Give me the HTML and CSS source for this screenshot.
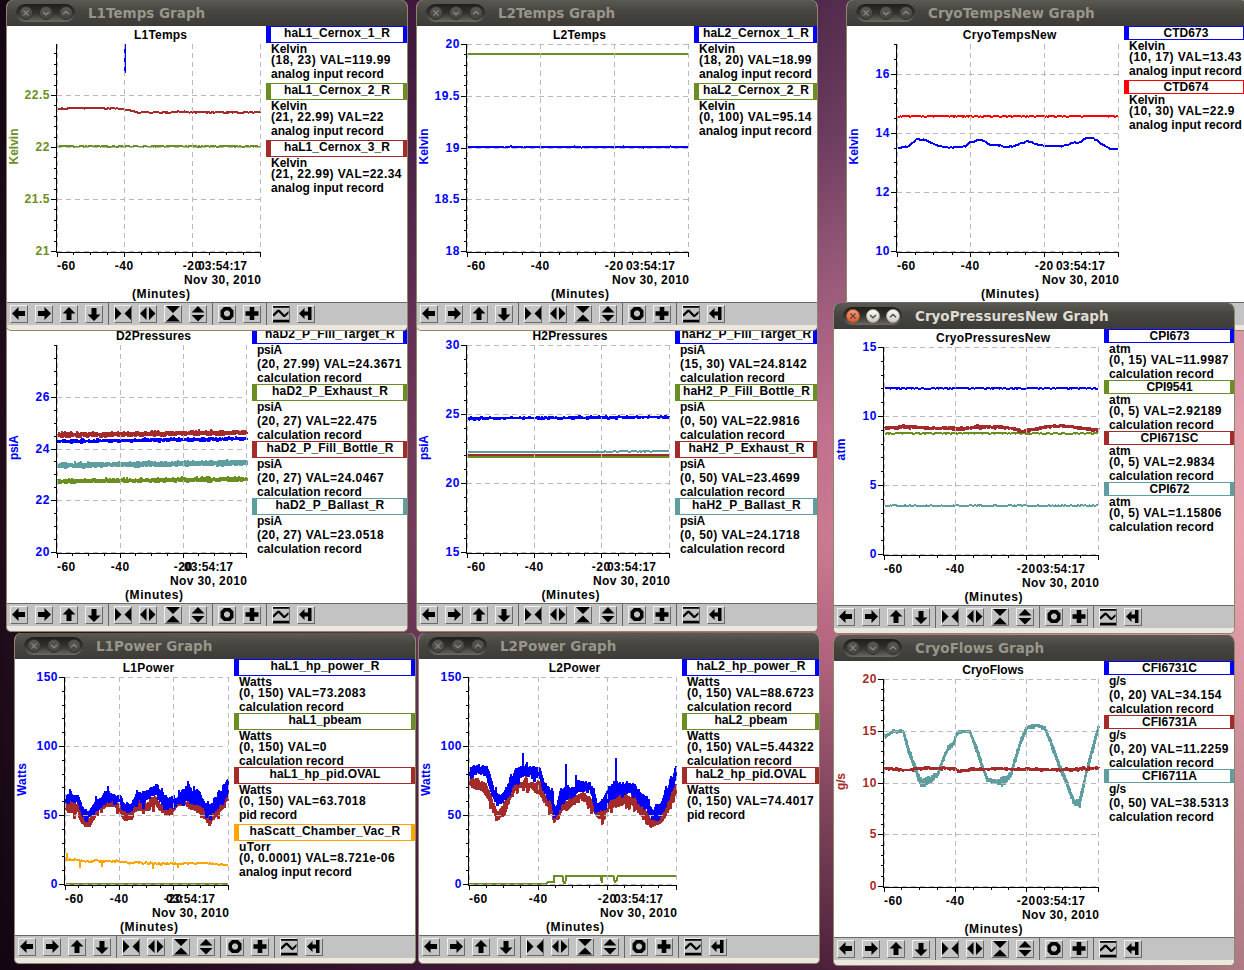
FILE: index.html
```html
<!DOCTYPE html>
<html lang="en">
<head>
<meta charset="utf-8">
<title>Strip charts</title>
<link rel="stylesheet" href="styles.css">
</head>
<body>
<main class="desktop" id="desktop"></main>
<script src="app.js"></script>
</body>
</html>
```

FILE: styles.css
```css
* { box-sizing: border-box; }
body { margin: 0; overflow: hidden; font-family: "Liberation Sans", Arial, sans-serif; }

.desktop {
  position: relative;
  width: 1244px;
  height: 970px;
  overflow: hidden;
  background:
    linear-gradient(90deg, rgba(14,2,14,.9) 0, rgba(44,10,46,.55) 33%, rgba(60,10,50,0) 66%, rgba(255,190,190,.12) 75%, rgba(255,196,196,.55) 100%),
    linear-gradient(180deg, #50294b 0, #6b3b5e 14%, #905474 26%, #c0708e 44%, #ca7a90 56%, #b0627c 68%, #7c4258 84%, #4a2038 100%);
}

.window {
  position: absolute;
  width: 402px;
  height: 331px;
  display: flex;
  flex-direction: column;
  border: 1px solid #8d866c;
  border-top: 0;
  border-radius: 7px 7px 5px 5px;
  background: #ece8e0;
  overflow: hidden;
}
.titlebar {
  flex: 0 0 26px;
  display: flex;
  align-items: center;
  gap: 13px;
  padding-left: 9px;
  background: linear-gradient(#5b5952, #464540 45%, #3c3b37);
}
.controls {
  width: 59px;
  height: 18px;
  display: flex;
  align-items: center;
  justify-content: center;
  gap: 6px;
  border-radius: 9px;
  background: linear-gradient(#1f1e1b, #33322e 50%, #6b6962);
}
.control {
  width: 14px;
  height: 14px;
  border-radius: 50%;
  border: 1px solid #33322e;
  background: linear-gradient(#5a5852, #45433e);
  stroke: #8c887e;
}
.active .control { background: linear-gradient(#fbfaf7, #cfcac0); border-color: #a9a59b; stroke: #4a4843; }
.active .control:first-child { background: linear-gradient(#f79a75, #df5a2b); border-color: #b0532f; }
.control svg { display: block; width: 12px; height: 12px; fill: none; stroke-width: 1.3; }
.caption {
  font: bold 13.5px "DejaVu Sans", sans-serif;
  color: #99958a;
  white-space: nowrap;
}
.active .caption { color: #dfdbd2; }

.body { flex: 0 0 276px; display: flex; background: #fff; }
.plot { flex: none; display: block; font-size: 12px; font-weight: bold; }
.grid { fill: none; stroke: #b9b9b9; stroke-dasharray: 5 4; }
.axis { fill: none; stroke: #000; }
.trace { fill: none; stroke-linejoin: bevel; }

.legend { flex: 1; min-width: 0; font-size: 12px; font-weight: bold; line-height: 12px; }
.name {
  height: 14px;
  border: solid;
  border-width: 1px 4px 1px 5px;
  line-height: 12px;
  text-align: center;
  white-space: nowrap;
}
.name.tall { height: 17px; }
.row { height: 14px; padding-left: 5px; white-space: nowrap; }
.row.short { height: 11px; }
.row.last { height: 12px; }
.row.deep { height: 15px; }
.ink { color: #000; display: inline-block; }

.toolbar {
  flex: 0 0 23px;
  display: flex;
  align-items: center;
  background: #c3c3c3;
  border-top: 1px solid #6a6a6a;
  padding-left: 3px;
}
.tools { display: flex; gap: 7px; }
.tools + .tools { border-left: 1px solid #666; height: 22px; align-items: center; padding-left: 5px; margin-left: 5px; }
.tool {
  width: 18px;
  height: 18px;
  border: 1px solid;
  border-color: #f0f0f0 #6a6a6a #6a6a6a #f0f0f0;
}
.tool svg { display: block; width: 16px; height: 16px; overflow: visible; }
```

FILE: app.js
```js
const BLUE = '#0000ff', GREEN = '#6b8e23', BROWN = '#a52a2a', TEAL = '#5f9ea0', RED = '#ff0000', ORANGE = '#ffa500';
const AI = ['analog input record', 113], CALC = ['calculation record', 105], PID = ['pid record', 58];

// Traces are envelopes: [x, top, bottom] in thirds of a pixel, offset by (dx, dy) pixels.
// A trace with thin set wanders on one centre line instead of filling the envelope.
const flat = (a, b, y0, y1, h) => [[a, y0 - h, y0 + h], [b, y1 - h, y1 + h]];

const windows = [
  { x: 7, y: 301, name: 'D2Pressures', nw: 75, right: 239, lo: 20, hi: 28, step: 2, minor: 4, unit: ['psiA', 25], ink: BLUE, dx: 7, dy: -24,
    traces: [
      { c: GREEN, e: flat(173, 740, 469, 462, 7) }, { c: TEAL, e: flat(173, 740, 421, 413, 9) },
      { c: BROWN, e: flat(173, 740, 330, 322, 8) }, { c: BLUE, e: flat(173, 740, 349, 341, 5) }],
    legend: [['haD2_P_Fill_Target_R', 130, BLUE, '(20, 27.99) VAL=24.3671', CALC], ['haD2_P_Exhaust_R', 116, GREEN, '(20, 27) VAL=22.475', CALC],
      ['haD2_P_Fill_Bottle_R', 127, BROWN, '(20, 27) VAL=24.0467', CALC], ['haD2_P_Ballast_R', 109, TEAL, '(20, 27) VAL=23.0518', CALC]] },
  { x: 417, y: 301, name: 'H2Pressures', nw: 75, right: 252, lo: 15, hi: 30, step: 5, minor: 5, unit: ['psiA', 25], ink: BLUE, dx: 7, dy: -24,
    traces: [
      { c: BLUE, e: flat(173, 778, 280, 276, 3.5) }, { c: GREEN, line: [[173, 396], [778, 396]] },
      { c: BROWN, line: [[173, 390], [778, 390]] }, { c: TEAL, thin: 1, e: [[173, 381, 381], [540, 381, 381], [560, 379, 381], [778, 376, 380]] }],
    legend: [['haH2_P_Fill_Target_R', 130, BLUE, '(15, 30) VAL=24.8142', CALC], ['haH2_P_Fill_Bottle_R', 127, GREEN, '(0, 50) VAL=22.9816', CALC],
      ['haH2_P_Exhaust_R', 116, BROWN, '(0, 50) VAL=23.4699', CALC], ['haH2_P_Ballast_R', 109, TEAL, '(0, 50) VAL=24.1718', CALC]] },
  { x: 7, y: 0, name: 'L1Temps', nw: 53, right: 253, lo: 21, hi: 22.99, step: .5, minor: 5, unit: ['Kelvin', 36], ink: GREEN, dx: 7, dy: 0,
    traces: [
      { c: BLUE, line: [[375, 132], [375, 218]] },
      { c: BROWN, thin: 1, e: [[173, 325, 329], [220, 322, 326], [370, 324, 328], [410, 335, 339], [500, 335, 340], [550, 332, 337], [600, 335, 340], [781, 334, 339]] },
      { c: GREEN, thin: 1, e: [[173, 437, 441], [781, 437, 441]] }],
    legend: [['haL1_Cernox_1_R', 106, BLUE, '(18, 23) VAL=119.99', AI], ['haL1_Cernox_2_R', 106, GREEN, '(21, 22.99) VAL=22', AI],
      ['haL1_Cernox_3_R', 106, BROWN, '(21, 22.99) VAL=22.34', AI]] },
  { x: 417, y: 0, name: 'L2Temps', nw: 53, right: 271, lo: 18, hi: 20, step: .5, minor: 5, unit: ['Kelvin', 36], ink: BLUE, dx: 7, dy: 0,
    traces: [{ c: GREEN, line: [[173, 162], [835, 162]] }, { c: BLUE, thin: 1, e: flat(173, 835, 441, 441, 1.8) }],
    legend: [['haL2_Cernox_1_R', 106, BLUE, '(18, 20) VAL=18.99', AI], ['haL2_Cernox_2_R', 106, GREEN, '(0, 100) VAL=95.14', AI]] },
  { x: 847, y: 0, name: 'CryoTempsNew', nw: 93.5, right: 271, lo: 10, hi: 17, step: 2, minor: 4, unit: ['Kelvin', 36], ink: BLUE, dx: 27, dy: 0,
    traces: [{ c: RED, thin: 1, e: flat(233, 895, 349, 349, 1.5) },
      { c: BLUE, thin: 1, e: [[233, 442, 445], [262, 438, 442], [290, 415, 420], [325, 420, 424], [350, 435, 439], [385, 441, 444], [437, 437, 441], [450, 424, 428], [485, 418, 422], [510, 431, 435], [565, 439, 443], [590, 433, 437], [625, 421, 425], [650, 430, 434], [675, 436, 439], [725, 436, 441], [750, 428, 433], [785, 423, 427], [795, 412, 415], [820, 412, 416], [845, 430, 434], [868, 444, 447], [895, 444, 448]] }],
    legend: [['CTD673', 45, BLUE, '(10, 17) VAL=13.43', AI], ['CTD674', 45, RED, '(10, 30) VAL=22.9', AI]] },
  { x: 834, y: 303, name: 'CryoPressuresNew', nw: 114, right: 264, lo: 0, hi: 15, step: 5, minor: 5, unit: ['atm', 22], ink: BLUE, dx: 9, dy: 3, active: true,
    traces: [{ c: BLUE, thin: 1, e: flat(180, 821, 265, 265, 1.6) }, { c: GREEN, thin: 1, e: flat(180, 821, 400, 400, 1.6) },
      { c: BROWN, e: [[180, 379, 390], [260, 374, 386], [310, 380, 389], [420, 382, 392], [450, 376, 386], [510, 376, 387], [555, 379, 388], [590, 390, 399], [630, 384, 393], [660, 376, 385], [710, 373, 382], [760, 379, 388], [821, 386, 396]] },
      { c: TEAL, thin: 1, e: flat(180, 821, 617, 617, 1.5) }],
    legend: [['CPI673', 40, BLUE, '(0, 15) VAL=11.9987', CALC], ['CPI9541', 46, GREEN, '(0, 5) VAL=2.92189', CALC],
      ['CPI671SC', 58, BROWN, '(0, 5) VAL=2.9834', CALC], ['CPI672', 40, TEAL, '(0, 5) VAL=1.15806', CALC]] },
  { x: 15, y: 633, name: 'L1Power', nw: 51.5, right: 213, lo: 0, hi: 150, step: 50, minor: 5, unit: ['Watts', 33], ink: BLUE, dx: 15, dy: 3,
    traces: [
      { c: BROWN, rough: 1, e: [[197, 515, 540], [205, 515, 552], [235, 515, 552], [245, 550, 580], [258, 565, 593], [272, 560, 593], [285, 545, 565], [300, 510, 540], [325, 505, 535], [345, 510, 535], [360, 520, 550], [372, 545, 575], [390, 545, 578], [400, 530, 550], [415, 510, 545], [440, 515, 545], [465, 490, 530], [480, 520, 545], [500, 530, 560], [515, 525, 555], [535, 512, 528], [560, 512, 530], [580, 515, 545], [605, 520, 555], [625, 545, 580], [640, 545, 575], [655, 525, 555], [670, 500, 535], [685, 470, 520]] },
      { c: BLUE, rough: 1, e: [[197, 492, 520], [215, 487, 510], [235, 495, 520], [245, 520, 550], [258, 545, 580], [275, 530, 550], [290, 505, 545], [305, 495, 535], [322, 475, 520], [340, 493, 515], [362, 493, 520], [372, 520, 545], [388, 525, 553], [400, 510, 535], [415, 480, 515], [430, 485, 525], [450, 475, 505], [470, 458, 495], [485, 485, 522], [500, 500, 542], [515, 495, 538], [525, 505, 535], [545, 480, 515], [565, 462, 515], [580, 475, 525], [600, 480, 525], [615, 510, 542], [628, 530, 560], [645, 500, 547], [655, 485, 535], [670, 460, 525], [685, 445, 490]] },
      { c: ORANGE, thin: 1, e: [[197, 686, 690], [240, 687, 693], [270, 690, 698], [360, 690, 696], [385, 697, 701], [440, 694, 704], [520, 698, 704], [600, 697, 701], [640, 700, 705], [685, 704, 706]] },
      { c: ORANGE, line: [[200, 669], [200, 690]] }, { c: ORANGE, line: [[239, 690], [239, 715]] }, { c: ORANGE, line: [[307, 690], [307, 711]] }, { c: ORANGE, line: [[459, 698], [459, 717]] }, { c: ORANGE, line: [[534, 698], [534, 715]] },
      { c: BLUE, line: [[565, 454], [565, 490]] }, { c: BLUE, line: [[324, 468], [324, 500]] },
      { c: GREEN, line: [[197, 761], [685, 761]] }],
    legend: [['haL1_hp_power_R', 109, BLUE, '(0, 150) VAL=73.2083', CALC], ['haL1_pbeam', 73, GREEN, '(0, 150) VAL=0', CALC],
      ['haL1_hp_pid.OVAL', 111, BROWN, '(0, 150) VAL=63.7018', PID], ['haScatt_Chamber_Vac_R', 151, ORANGE, '(0, 0.0001) VAL=8.721e-06', AI, ['uTorr', 32]]] },
  { x: 419, y: 633, name: 'L2Power', nw: 51.5, right: 257, lo: 0, hi: 150, step: 50, minor: 5, unit: ['Watts', 33], ink: BLUE, dx: 4, dy: 3,
    traces: [
      { c: BROWN, rough: 1, e: [[163, 445, 470], [175, 440, 480], [200, 450, 482], [215, 460, 500], [230, 500, 540], [245, 540, 570], [255, 535, 570], [270, 510, 550], [285, 480, 515], [300, 455, 485], [320, 450, 475], [350, 455, 480], [375, 460, 500], [385, 480, 520], [400, 500, 540], [412, 520, 560], [417, 540, 592], [425, 540, 575], [440, 510, 545], [455, 510, 545], [480, 500, 525], [500, 485, 508], [515, 490, 525], [530, 505, 545], [545, 525, 565], [560, 540, 575], [575, 525, 550], [590, 495, 535], [605, 485, 540], [625, 495, 525], [650, 495, 525], [670, 505, 548], [690, 535, 568], [710, 560, 600], [720, 565, 592], [740, 555, 582], [755, 520, 555], [770, 485, 520], [784, 455, 485]] },
      { c: BLUE, rough: 1, e: [[163, 412, 452], [185, 402, 432], [215, 405, 440], [230, 445, 500], [240, 485, 520], [255, 495, 530], [270, 475, 520], [285, 445, 490], [300, 412, 468], [325, 402, 440], [345, 405, 442], [375, 410, 445], [385, 448, 485], [400, 465, 502], [413, 475, 525], [418, 540, 565], [428, 520, 555], [435, 475, 530], [452, 470, 520], [475, 475, 505], [485, 450, 492], [500, 450, 485], [525, 453, 485], [538, 488, 532], [548, 515, 550], [560, 505, 540], [575, 488, 530], [590, 457, 515], [604, 450, 505], [620, 458, 505], [640, 453, 495], [665, 462, 512], [680, 488, 532], [700, 508, 552], [715, 540, 575], [730, 525, 570], [745, 495, 550], [760, 465, 515], [775, 435, 475], [784, 395, 435]] },
      { c: BLUE, line: [[324, 370], [324, 420]] }, { c: BLUE, line: [[452, 402], [452, 500]] }, { c: BLUE, line: [[604, 385], [604, 480]] }, { c: BLUE, line: [[484, 436], [484, 470]] },
      { c: GREEN, line: [[163, 761], [397, 761], [397, 757], [416, 757], [417, 738], [443, 738], [446, 759], [451, 759], [453, 738], [558, 738], [560, 760], [562, 738], [596, 738], [599, 757], [605, 750], [608, 738], [784, 738]] }],
    legend: [['haL2_hp_power_R', 109, BLUE, '(0, 150) VAL=88.6723', CALC], ['haL2_pbeam', 73, GREEN, '(0, 150) VAL=5.44322', CALC],
      ['haL2_hp_pid.OVAL', 111, BROWN, '(0, 150) VAL=74.4017', PID]] },
  { x: 834, y: 635, name: 'CryoFlows', nw: 61.5, right: 264, lo: 0, hi: 20, step: 5, minor: 5, unit: ['g/s', 17], ink: BROWN, dx: 9, dy: 5,
    traces: [
      { c: TEAL, e: [[180, 316, 327], [205, 299, 309], [235, 299, 311], [250, 350, 374], [265, 390, 415], [280, 430, 455], [290, 442, 472], [300, 440, 470], [315, 440, 460], [340, 422, 440], [350, 393, 407], [370, 348, 360], [385, 338, 352], [395, 305, 317], [415, 299, 309], [435, 301, 312], [455, 350, 372], [470, 396, 415], [487, 443, 457], [520, 448, 465], [530, 442, 472], [545, 438, 462], [560, 422, 442], [570, 382, 403], [590, 318, 338], [607, 286, 300], [635, 279, 291], [660, 290, 302], [675, 322, 342], [700, 393, 412], [720, 438, 457], [740, 488, 512], [750, 510, 534], [765, 502, 532], [775, 460, 482], [790, 398, 418], [800, 358, 382], [821, 285, 299]] },
      { c: BROWN, e: [[180, 411, 419], [245, 416, 425], [290, 411, 419], [385, 411, 419], [400, 418, 428], [450, 415, 423], [520, 412, 420], [600, 415, 422], [750, 415, 423], [821, 409, 418]] }],
    legend: [['CFI6731C', 55, BLUE, '(0, 20) VAL=34.154', CALC], ['CFI6731A', 55, BROWN, '(0, 20) VAL=11.2259', CALC],
      ['CFI6711A', 55, TEAL, '(0, 50) VAL=38.5313', CALC]] }
];

const icons = [
  ['M1 7.5 7.5 1V5H14V10H7.5V14Z', 'M15 7.5 8.5 1V5H2V10H8.5V14Z', 'M8 1 14.5 7.5H10.5V14H5.5V7.5H1.5Z', 'M8 15 1.5 8.5H5.5V2H10.5V8.5H14.5Z'],
  ['M0 1 6.5 7.5 0 14ZM16 1 9.5 7.5 16 14Z', 'M0 7.5 6.5 1V14ZM15.5 7.5 9 1V14Z', 'M1 0H15L8 7ZM1 15.5H15L8 8.5Z', 'M8 0 14.5 6.5H1.5ZM8 15.5 1.5 9H14.5Z'],
  ['M5 1H11L14.5 4.5V10.5L11 14H5L1.5 10.5V4.5ZM6.8 4.5 5 6.3V8.7L6.8 10.5H9.2L11 8.7V6.3L9.2 4.5Z', 'M5.7 1H10.3V5.2H14.5V9.8H10.3V14H5.7V9.8H1.5V5.2H5.7Z'],
  ['M0 0H16V1.8H0ZM0 13.8H16V16H0ZM0 8 4.5 3.8H6.5L11.5 8.8 15.5 5V7.5L12 11H10.5L5.5 6 1 10.2H0Z', 'M1 7.5 6.5 2V5.5H10V1H13.5V14H10V9.5H6.5V13Z']
];
const glyphs = ['M3.4 3.4 8.6 8.6M8.6 3.4 3.4 8.6', 'M3 5 6 7.8 9 5', 'M3 7.2 6 4.4 9 7.2'];

let seed = 11;
const rand = () => (seed = (seed * 1103515245 + 12345) % 2147483648) / 2147483648;

function envelopeAt(e, x) {
  let i = 1;
  while (i < e.length - 1 && e[i][0] < x) i++;
  const [a, b] = [e[i - 1], e[i]];
  const t = Math.max(0, Math.min(1, (x - a[0]) / (b[0] - a[0])));
  return [a[1] + (b[1] - a[1]) * t, a[2] + (b[2] - a[2]) * t];
}

function trace(w, s) {
  const pts = [];
  const put = (x, y) => pts.push((x / 3 - w.dx).toFixed(1) + ',' + (y / 3 - w.dy - 26).toFixed(1));
  if (s.line) s.line.forEach(p => put(p[0], p[1]));
  else {
    const end = s.e[s.e.length - 1][0];
    for (let x = s.e[0][0], k = 0; x <= end; x += s.thin ? 4 : 1.5, k++) {
      const [top, bottom] = envelopeAt(s.e, x);
      const span = bottom - top;
      if (s.thin) put(x, top + span * rand());
      else {
        const stretch = rand() < .14 ? (s.rough ? 14 * rand() + 3 : 3) : 0;
        put(x, k % 2 ? top + span * .3 * rand() - stretch : bottom - span * .3 * rand() + stretch);
      }
    }
  }
  return `<polyline class="trace" stroke="${s.c}" stroke-width="${s.thin || s.line ? 2 : 2.4}" points="${pts.join(' ')}"/>`;
}

function plot(w) {
  const L = 50, R = w.right, T = 18, B = 225;
  const text = (x, y, s, len, anchor, fill) =>
    `<text x="${x}" y="${y}" textLength="${len}" text-anchor="${anchor}" fill="${fill || '#000'}">${s}</text>`;
  let axis = '', grid = '', labels = '';
  for (let i = 0; i <= 12; i++) {
    const x = Math.floor(L + (R - L) * i / 12) + .5;
    axis += `M${x} 227V${i % 4 ? 229 : 231}`;
    if (i % 4 === 0) grid += `M${x} ${T}V${B}`;
  }
  const yOf = v => Math.round(B - (v - w.lo) / (w.hi - w.lo) * (B - T)) + .5;
  const small = w.step / w.minor;
  for (let n = 0; w.lo + n * small <= w.hi + 1e-6; n++) {
    const v = w.lo + n * small, y = yOf(v), major = n % w.minor === 0 && !(w.name === 'D2Pressures' && v === 28);
    axis += `M${major ? 44 : 47} ${y}H49`;
    if (!major) continue;
    grid += `M${L} ${y}H${R}`;
    const s = String(v);
    labels += text(42.5, y + 3.5, s, s.replace('.', '').length * 7 + (s.includes('.') ? 4 : 0), 'end', w.ink);
  }
  const mid = (L + R) / 2 + 2, x1 = Math.floor(L + (R - L) / 3), x2 = Math.floor(L + (R - L) * 2 / 3);
  labels += text(mid, 12.5, w.name, w.nw, 'middle') + text(L, 244, '-60', 18.3, 'start') + text(x1, 244, '-40', 18.3, 'middle')
    + text(x2, 244, '-20', 18.3, 'middle') + text(R - 37.5, 244, '03:54:17', 49, 'middle')
    + text(R + 1, 258, 'Nov 30, 2010', 77, 'end') + text(mid + .5, 272, '(Minutes)', 58, 'middle')
    + `<text transform="translate(11 120.5) rotate(-90)" textLength="${w.unit[1]}" text-anchor="middle" fill="${w.ink}">${w.unit[0]}</text>`;
  return `<svg class="plot" width="${R + 6}" height="276"><g shape-rendering="crispEdges">
    ${w.traces.map(s => trace(w, s)).join('')}
    <path class="grid" d="${grid}"/><path class="axis" d="M49.5 18V226.5H${R + 1}${axis}"/></g>${labels}</svg>`;
}

const ink = (s, width) => `<span class="ink" data-w="${width}">${s}</span>`;
function valueWidth(s) {
  const digits = s.replace(/\D/g, '').length, dots = s.split('.').length - 1;
  return 53 + digits * 7 + dots * 4 + (s.includes('e-') ? 11 : 0);
}
function entry(w, [name, nw, color, value, record, unit = w.unit]) {
  return `<div class="name ${name.includes('_') ? 'tall' : ''}" style="border-color:${color}">${ink(name, nw)}</div>
    <div class="row ${/[pg]/.test(unit[0]) ? '' : 'short'}">${ink(...unit)}</div>
    <div class="row">${ink(value, valueWidth(value))}</div>
    <div class="row ${/[pg]/.test(record[0]) ? 'deep' : 'last'}">${ink(...record)}</div>`;
}

document.getElementById('desktop').innerHTML = windows.map(w => `
  <section class="window ${w.active ? 'active' : ''}" style="left:${w.x - 1}px;top:${w.y}px">
    <header class="titlebar">
      <div class="controls">${glyphs.map(g => `<span class="control"><svg viewBox="0 0 12 12"><path d="${g}"/></svg></span>`).join('')}</div>
      <span class="caption">${w.name} Graph</span>
    </header>
    <div class="body">${plot(w)}<div class="legend">${w.legend.map(e => entry(w, e)).join('')}</div></div>
    <div class="toolbar">${icons.map(group => `<div class="tools">${group.map(d =>
      `<span class="tool"><svg viewBox="0 0 16 16"><path fill-rule="evenodd" d="${d}"/></svg></span>`).join('')}</div>`).join('')}</div>
  </section>`).join('');

// Tune letter spacing so that each legend line takes its listed width.
document.querySelectorAll('.ink').forEach(el => {
  const extra = (el.dataset.w - el.getBoundingClientRect().width) / el.textContent.length;
  el.style.letterSpacing = extra.toFixed(3) + 'px';
});
```
